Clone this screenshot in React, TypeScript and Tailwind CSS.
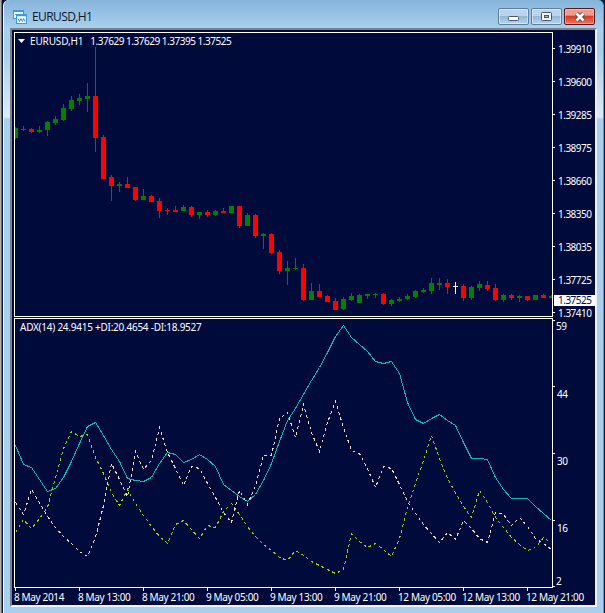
import React from "react";

type Tone = "up" | "down" | "doji";
type Candle = [Tone, number, number, number, number];

const STEP = 8;
const FIRST_X = 15;

const FILL: Record<Tone, string> = {
    up: "#008000",
    down: "#ff0000",
    doji: "#ffffff",
};

// tone, body top, body bottom, wick top, wick bottom
const candles: Candle[] = [
    ["up", 128, 138, 127, 139],
    ["down", 129, 130, 126, 131],
    ["down", 129, 132, 128, 133],
    ["up", 130, 132, 126, 133],
    ["up", 122, 130, 121, 136],
    ["up", 119, 123, 116, 125],
    ["up", 108, 120, 104, 121],
    ["up", 100, 109, 96, 111],
    ["up", 98, 101, 94, 105],
    ["up", 96, 99, 83, 112],
    ["down", 96, 138, 47, 152],
    ["down", 137, 179, 135, 179],
    ["down", 177, 186, 175, 201],
    ["up", 184, 186, 182, 192],
    ["down", 184, 188, 177, 188],
    ["down", 187, 200, 187, 201],
    ["up", 196, 200, 189, 200],
    ["down", 196, 202, 195, 202],
    ["down", 201, 211, 198, 218],
    ["down", 210, 211, 208, 215],
    ["down", 210, 212, 206, 212],
    ["up", 207, 211, 205, 211],
    ["down", 207, 215, 206, 217],
    ["up", 212, 215, 212, 219],
    ["down", 212, 215, 210, 217],
    ["up", 211, 215, 210, 216],
    ["down", 211, 213, 208, 213],
    ["up", 206, 213, 206, 213],
    ["down", 206, 226, 206, 228],
    ["up", 215, 226, 213, 226],
    ["down", 215, 236, 214, 238],
    ["up", 234, 236, 233, 249],
    ["down", 234, 253, 233, 254],
    ["down", 252, 271, 250, 274],
    ["up", 268, 271, 261, 285],
    ["up", 268, 269, 258, 270],
    ["down", 268, 300, 264, 301],
    ["up", 291, 300, 283, 300],
    ["down", 291, 297, 284, 297],
    ["down", 296, 302, 295, 302],
    ["down", 301, 310, 298, 310],
    ["up", 299, 309, 297, 310],
    ["up", 296, 300, 293, 301],
    ["up", 295, 303, 294, 303],
    ["up", 294, 296, 294, 299],
    ["up", 294, 295, 293, 298],
    ["down", 294, 304, 293, 305],
    ["up", 300, 304, 299, 306],
    ["up", 299, 301, 297, 302],
    ["up", 296, 299, 294, 300],
    ["up", 291, 297, 290, 298],
    ["up", 290, 292, 288, 293],
    ["up", 283, 291, 278, 294],
    ["up", 283, 285, 278, 290],
    ["down", 283, 287, 279, 294],
    ["doji", 286, 287, 282, 294],
    ["down", 286, 298, 284, 301],
    ["up", 287, 298, 286, 300],
    ["up", 284, 288, 281, 291],
    ["down", 285, 289, 281, 291],
    ["down", 288, 300, 284, 301],
    ["up", 295, 300, 294, 302],
    ["down", 295, 298, 294, 300],
    ["up", 296, 298, 295, 302],
    ["down", 296, 300, 296, 301],
    ["up", 295, 300, 295, 300],
    ["down", 295, 298, 294, 298],
    ["up", 296, 298, 295, 298],
];

const adx = [
    445, 464, 467, 479, 491, 488, 477, 461, 443, 426, 422, 435, 449, 461, 478, 480, 481,
    477, 463, 452, 454, 462, 459, 454, 459, 466, 484, 490, 496, 501, 494, 480, 463, 441,
    420, 408, 394, 380, 367, 352, 336, 325, 337, 344, 351, 361, 363, 361, 373, 402, 419,
    423, 418, 414, 420, 425, 442, 458, 458, 459, 477, 489, 498, 498, 498, 506, 513, 520,
];

const plusDi = [
    532, 519, 528, 518, 507, 477, 448, 431, 436, 434, 457, 473, 492, 505, 489, 503, 515,
    526, 536, 543, 524, 520, 529, 538, 525, 527, 511, 503, 514, 526, 536, 544, 550, 557,
    560, 550, 555, 561, 565, 569, 573, 569, 533, 541, 547, 543, 549, 556, 538, 507, 483,
    460, 435, 458, 478, 492, 506, 517, 490, 502, 517, 527, 537, 544, 550, 547, 537, 543,
];

const minusDi = [
    502, 514, 489, 502, 516, 527, 536, 543, 551, 556, 537, 505, 463, 479, 496, 451, 469,
    460, 427, 452, 468, 485, 466, 468, 483, 497, 512, 522, 490, 504, 485, 455, 455, 418,
    412, 437, 404, 432, 451, 422, 401, 427, 450, 453, 468, 487, 466, 468, 484, 501, 513,
    524, 533, 542, 532, 539, 520, 528, 538, 542, 512, 514, 525, 517, 526, 538, 543, 549,
];

const prices = [
    "1.39910",
    "1.39600",
    "1.39285",
    "1.38975",
    "1.38660",
    "1.38350",
    "1.38035",
    "1.37725",
    "1.37410",
];

const times = [
    "8 May 2014",
    "8 May 13:00",
    "8 May 21:00",
    "9 May 05:00",
    "9 May 13:00",
    "9 May 21:00",
    "12 May 05:00",
    "12 May 13:00",
    "12 May 21:00",
];

const toPoints = (values: number[]) =>
    values.map((y, i) => `${FIRST_X + i * STEP + 0.5},${y + 0.5}`).join(" ");

function PriceChart() {
    return (
        <svg
            width="537"
            height="283"
            viewBox="15 33 537 283"
            shapeRendering="crispEdges"
            className="block"
        >
            {candles.map(([tone, top, bottom, high, low], i) => {
                const x = FIRST_X + i * STEP;
                return (
                    <g key={i} fill={FILL[tone]}>
                        <rect x={x} y={high} width={1} height={low - high} />
                        <rect x={x - 2} y={top} width={5} height={bottom - top} />
                    </g>
                );
            })}
        </svg>
    );
}

function AdxChart() {
    return (
        <svg
            width="537"
            height="268"
            viewBox="15 319 537 268"
            shapeRendering="crispEdges"
            fill="none"
            className="block"
        >
            <polyline points={toPoints(adx)} stroke="#10b8b0" />
            <polyline points={toPoints(plusDi)} stroke="#88d810" strokeDasharray="3 3" />
            <polyline points={toPoints(minusDi)} stroke="#f5deb3" strokeDasharray="3 3" />
        </svg>
    );
}

function AppIcon() {
    return (
        <svg width="14" height="14" viewBox="0 0 14 14" fill="none" className="block">
            <rect x="0.5" y="0.5" width="10" height="8" fill="#fff" stroke="#3b9ade" />
            <path d="M1 1.5h9" stroke="#3b9ade" />
            <path d="M2 5l1-1 1 2 1-2 1 1 2-1" stroke="#5aa9e2" />
            <rect x="3.5" y="4.5" width="10" height="9" fill="#fff" stroke="#3b9ade" />
            <path d="M4 5.5h9" stroke="#3b9ade" strokeWidth="1.5" />
            <path d="M5 8.5l1.5 3 1.5-3 1.5 3 1-3 1.5 3" stroke="#3b8fd0" />
        </svg>
    );
}

const captionBtn =
    "flex h-[17px] w-[31px] items-center justify-center rounded-[2px] border border-[#5d7f9f] bg-gradient-to-b from-[#b9d4eb] from-45% via-[#94b8d8] via-50% to-[#b4d4ee] shadow-[inset_0_0_0_1px_rgba(255,255,255,0.45)]";

function TitleBar() {
    return (
        <div className="flex h-7 items-start justify-between">
            <div className="flex items-center gap-[5px] pt-2 pl-[3px]">
                <AppIcon />
                <span className="font-['Open_Sans','Noto_Sans',sans-serif] text-[12px] leading-[18px] tracking-[-0.6px] text-[#0b1a2b]">
                    EURUSD,H1
                </span>
            </div>
            <div className="flex gap-0.5 pt-2 pr-0.5">
                <button className={captionBtn} aria-label="Minimize">
                    <svg width="12" height="6" viewBox="0 0 12 6" className="mt-1 block">
                        <rect x="0.5" y="0.5" width="10" height="4" rx="1" fill="#fff" stroke="#4b5563" />
                    </svg>
                </button>
                <button className={captionBtn} aria-label="Maximize">
                    <svg width="11" height="9" viewBox="0 0 11 9" className="block">
                        <rect x="0.5" y="0.5" width="10" height="8" rx="1" fill="#f4f4f4" stroke="#4b5563" />
                        <rect x="3.5" y="3.5" width="4" height="2" fill="#9dbcd8" stroke="#4b5563" />
                    </svg>
                </button>
                <button
                    className="flex h-[17px] w-[31px] items-center justify-center rounded-[2px] border border-[#5c1420] bg-gradient-to-b from-[#eb9c8c] from-40% via-[#d43b28] via-50% to-[#ee7460] shadow-[inset_0_0_0_1px_rgba(255,255,255,0.35)]"
                    aria-label="Close"
                >
                    <svg width="12" height="10" viewBox="0 0 12 10" className="block">
                        <path d="M2.5 1.5l7 7M9.5 1.5l-7 7" stroke="#53464c" strokeWidth="4.4" />
                        <path d="M2.5 1.5l7 7M9.5 1.5l-7 7" stroke="#fff" strokeWidth="2.6" />
                    </svg>
                </button>
            </div>
        </div>
    );
}

function Tick() {
    return <span className="h-px w-0.5 shrink-0 bg-white" />;
}

function PriceScale() {
    return (
        <div className="relative h-[285px] w-[42px] tracking-[-0.5px]">
            {prices.map((p) => (
                <div key={p} className="flex h-[33px] items-center gap-[3px]">
                    <Tick />
                    <span>{p}</span>
                </div>
            ))}
            <div className="absolute top-[263px] left-px h-[11px] w-[41px] bg-white pl-1 leading-[11px] text-[#000b3c]">
                1.37525
            </div>
        </div>
    );
}

function AdxScale() {
    return (
        <div className="mt-px flex h-[270px] w-[42px] flex-col pt-0.5 tracking-[-0.5px]">
            <div className="flex h-[66px] gap-px">
                <Tick />
                <span>59</span>
            </div>
            {["44", "30", "16"].map((v) => (
                <div key={v} className="flex h-[67px] gap-0.5">
                    <Tick />
                    <span className="pt-0.5">{v}</span>
                </div>
            ))}
            <div className="-mt-3 flex items-end gap-px">
                <Tick />
                <span>2</span>
            </div>
        </div>
    );
}

export default function App() {
    return (
        <div className="flex h-[613px] w-[605px] overflow-hidden bg-[#071238] font-['Noto_Sans','DejaVu_Sans',sans-serif] text-[10px] leading-3 tracking-[-0.25px] whitespace-nowrap text-white">
            <div className="w-0.5 border-r border-[#6b6b6b] bg-[#b0b0b0]" />
            <div className="ml-px flex h-full w-[601px] flex-col rounded-t-md border-r border-l border-r-[#18b8e8] border-l-white bg-[#a6d0ef] bg-[linear-gradient(180deg,#86b4d9_0px,#a8d0ef_28px,#a6cfee_50px,#dcebf7_117px,#a6d0ef_119px)] px-1.5">
                <TitleBar />
                <div className="flex h-[579px] w-[587px] shrink-0 flex-col border-2 border-t-[#808080] border-r-[#f3f3f3] border-b-[#f3f3f3] border-l-[#808080] bg-[#000b3c] pt-0.5 pl-0.5">
                    <div className="flex">
                        <div className="relative border border-white">
                            <PriceChart />
                            <div className="absolute top-[2px] left-[3px] flex items-center">
                                <svg width="7" height="4" viewBox="0 0 7 4" className="block">
                                    <path d="M0 0h7L3.5 4z" fill="#fff" />
                                </svg>
                                <span className="ml-[5px] tracking-[-0.15px]">EURUSD,H1</span>
                                <span className="ml-[7px] tracking-[-0.48px]">
                                    1.37629 1.37629 1.37395 1.37525
                                </span>
                            </div>
                        </div>
                        <PriceScale />
                    </div>
                    <div className="flex">
                        <div className="relative mt-px border border-white">
                            <AdxChart />
                            <div className="absolute top-[2px] left-[5px]">
                                ADX(14) 24.9415 +DI:20.4654 -DI:18.9527
                            </div>
                        </div>
                        <AdxScale />
                    </div>
                    <div className="flex tracking-[-0.35px]">
                        {times.map((t) => (
                            <div key={t} className="w-16 shrink-0">
                                <div className="ml-px h-[3px] w-px bg-white" />
                                <div>{t}</div>
                            </div>
                        ))}
                    </div>
                </div>
            </div>
        </div>
    );
}
